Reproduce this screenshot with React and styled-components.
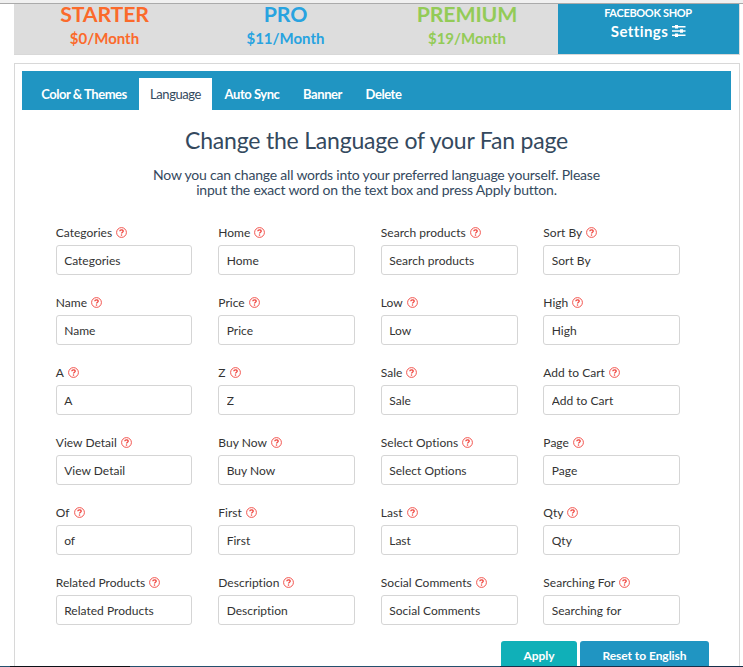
import React from "react";
import styled, { createGlobalStyle } from "styled-components";

const GlobalStyle = createGlobalStyle`
  * { box-sizing: border-box; }
  html, body { margin: 0; padding: 0; height: 667px; overflow: hidden; background: #fff; }
  body { font-family: Lato, "Open Sans", sans-serif; color: #333; }
`;

const Page = styled.div`
  width: 743px;
  height: 667px;
  overflow: hidden;
  display: flex;
  flex-direction: column;
`;

const TopEdge = styled.div`
  height: 4px;
  flex: none;
  background: #f0f0f0;
  border-bottom: 1px solid #aaa;
`;

const Plans = styled.header`
  flex: none;
  display: grid;
  grid-template-columns: 181px 181px 182px 181px;
  width: 726px;
  height: 51px;
  margin-left: 14px;
  background: #ddd;
  border-right: 1px solid #ddd;
  border-bottom: 1px solid #d8d8d8;
`;

const Plan = styled.div`
  text-align: center;
  color: ${(p) => p.$color};
  font-weight: 700;
`;

const PlanName = styled.div`
  margin-top: -4px;
  font-size: 21.3px;
  line-height: 28px;
  letter-spacing: -0.15px;
`;

const PlanPrice = styled.div`
  font-size: 15px;
  line-height: 21px;
`;

const SettingsCell = styled.div`
  background: #2095c2;
  color: #fff;
  text-align: center;
  font-weight: 700;
`;

const ShopLabel = styled.div`
  padding-right: 1px;
  font-size: 11px;
  line-height: 18px;
  letter-spacing: -0.33px;
`;

const SettingsLabel = styled.div`
  display: flex;
  justify-content: center;
  align-items: center;
  gap: 4px;
  font-size: 15px;
  line-height: 18px;
  letter-spacing: 0.4px;
`;

const Panel = styled.main`
  flex: 1;
  width: 726px;
  margin: 8px 0 0 14px;
  padding: 7px;
  border: 1px solid #d8d8d8;
  border-bottom: 0;
`;

const Tabs = styled.nav`
  display: flex;
  align-items: flex-end;
  height: 39px;
  width: 709px;
  padding-left: 7px;
  background: #2095c2;
`;

const Tab = styled.div`
  height: 32px;
  width: ${(p) => p.$width}px;
  text-align: center;
  line-height: 33px;
  font-size: 13px;
  letter-spacing: -0.45px;
  font-weight: ${(p) => (p.$active ? 400 : 700)};
  color: ${(p) => (p.$active ? "#34495e" : "#fff")};
  background: ${(p) => (p.$active ? "#fff" : "transparent")};
`;

const Title = styled.h1`
  margin: 16px 1px 0 0;
  font-size: 23px;
  line-height: 28px;
  font-weight: 400;
  letter-spacing: -0.2px;
  text-align: center;
  color: #34495e;
`;

const Intro = styled.p`
  margin: 13px 1px 0 0;
  font-size: 14px;
  line-height: 15px;
  letter-spacing: -0.2px;
  text-align: center;
  color: #34495e;
`;

const Fields = styled.div`
  display: grid;
  grid-template-columns: repeat(4, 136.7px);
  grid-auto-rows: 50px;
  column-gap: 25.85px;
  row-gap: 20px;
  margin: 28px 0 0 33.75px;
`;

const FieldLabel = styled.label`
  display: flex;
  align-items: center;
  gap: 4px;
  height: 20px;
  padding-bottom: 5px;
  font-size: 12px;
  letter-spacing: 0.02px;
  white-space: nowrap;
`;

const FieldInput = styled.input`
  display: block;
  width: 100%;
  height: 30px;
  padding: 1px 7px 0 7.4px;
  border: 1px solid #d5d5d5;
  border-radius: 3px;
  background: #fff;
  color: #333;
  font: 400 12px Lato, "Open Sans", sans-serif;
  letter-spacing: 0.02px;
  outline: 0;
`;

const Actions = styled.div`
  display: flex;
  gap: 3px;
  margin: 16px 0 0 479px;
`;

const Button = styled.button`
  width: ${(p) => p.$width}px;
  height: 30px;
  padding: 0;
  border: 0;
  border-radius: 3px;
  background: ${(p) => p.$color};
  color: #fff;
  font: 700 12px/30px Lato, "Open Sans", sans-serif;
  letter-spacing: -0.05px;
`;

const BottomEdge = styled.div`
  position: fixed;
  left: 0;
  top: 666px;
  width: 743px;
  height: 1px;
  background: linear-gradient(90deg, #24506e 0 10px, #0c1118 10px 130px, #24506e 130px 500px, #17304a 500px);
`;

const HelpIcon = () => (
  <svg width="11" height="11" viewBox="0 0 11 11" fill="none" stroke="#f0433c">
    <circle cx="5.5" cy="5.5" r="4.9" strokeWidth="0.9" />
    <path d="M3.8 4.3C3.8 2.3 7.2 2.3 7.2 4.2C7.2 5.3 5.5 5.2 5.5 6.6" strokeWidth="1.3" />
    <path d="M5.5 7.4V8.7" strokeWidth="1.3" />
  </svg>
);

const SlidersIcon = () => (
  <svg width="14" height="12" viewBox="0 0 14 12" fill="#fff">
    <path d="M0 1H13.5V2.4H0ZM0 5.3H13.5V6.7H0ZM0 9.6H13.5V11H0Z" />
    <path d="M3 0H6V3.4H3ZM8 4.3H11V7.7H8ZM3 8.6H6V12H3Z" />
  </svg>
);

const fields = [
  ["Categories"], ["Home"], ["Search products"], ["Sort By"],
  ["Name"], ["Price"], ["Low"], ["High"],
  ["A"], ["Z"], ["Sale"], ["Add to Cart"],
  ["View Detail"], ["Buy Now"], ["Select Options"], ["Page"],
  ["Of", "of"], ["First"], ["Last"], ["Qty"],
  ["Related Products"], ["Description"], ["Social Comments"], ["Searching For", "Searching for"],
];

export default function App() {
  return (
    <Page>
      <GlobalStyle />
      <TopEdge />
      <Plans>
        <Plan $color="#fb6a2b"><PlanName>STARTER</PlanName><PlanPrice>$0/Month</PlanPrice></Plan>
        <Plan $color="#28a3e0"><PlanName>PRO</PlanName><PlanPrice>$11/Month</PlanPrice></Plan>
        <Plan $color="#93cb57"><PlanName>PREMIUM</PlanName><PlanPrice>$19/Month</PlanPrice></Plan>
        <SettingsCell>
          <ShopLabel>FACEBOOK SHOP</ShopLabel>
          <SettingsLabel>Settings <SlidersIcon /></SettingsLabel>
        </SettingsCell>
      </Plans>
      <Panel>
        <Tabs>
          <Tab $width={110}>Color &amp; Themes</Tab>
          <Tab $width={73} $active>Language</Tab>
          <Tab $width={80}>Auto Sync</Tab>
          <Tab $width={61}>Banner</Tab>
          <Tab $width={61}>Delete</Tab>
        </Tabs>
        <Title>Change the Language of your Fan page</Title>
        <Intro>
          Now you can change all words into your preferred language yourself. Please
          <br />
          input the exact word on the text box and press Apply button.
        </Intro>
        <Fields>
          {fields.map(([label, value = label]) => (
            <div key={label}>
              <FieldLabel>{label} <HelpIcon /></FieldLabel>
              <FieldInput defaultValue={value} aria-label={label} />
            </div>
          ))}
        </Fields>
        <Actions>
          <Button $width={76} $color="#10b0b8">Apply</Button>
          <Button $width={129} $color="#2095c2">Reset to English</Button>
        </Actions>
      </Panel>
      <BottomEdge />
    </Page>
  );
}
